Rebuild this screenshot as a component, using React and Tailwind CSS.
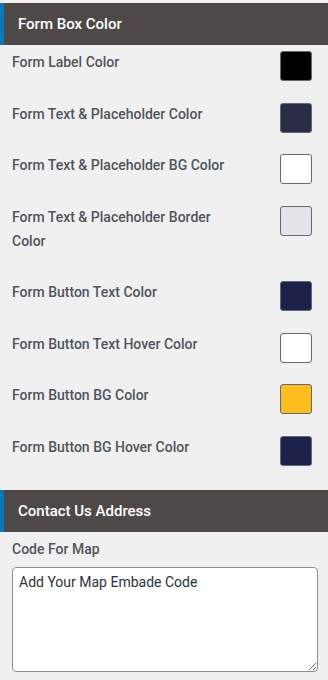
const rows = [
  { label: 'Form Label Color', color: 'bg-[#000000]' },
  { label: 'Form Text & Placeholder Color', color: 'bg-[#2a2d45]' },
  { label: 'Form Text & Placeholder BG Color', color: 'bg-white' },
  { label: 'Form Text & Placeholder Border Color', color: 'bg-[#e4e4e8]' },
  { label: 'Form Button Text Color', color: 'bg-[#1e2149]' },
  { label: 'Form Button Text Hover Color', color: 'bg-white' },
  { label: 'Form Button BG Color', color: 'bg-[#fbbc1c]' },
  { label: 'Form Button BG Hover Color', color: 'bg-[#1e2149]' },
]

const SectionHeader = ({ title, className }) => (
  <div className={`flex h-[42px] items-center bg-[#4e4947] ${className}`}>
    <div className="h-full w-1 bg-[#0a78b8]" />
    <h2 className="pl-[14px] text-[15px] font-medium text-white">{title}</h2>
  </div>
)

const ColorRow = ({ label, color }) => (
  <div className="flex items-start justify-between pl-3 pr-4 pt-[5px] pb-[15.5px]">
    <span className="max-w-[230px] pb-[7px] text-[14px] leading-6 font-medium text-[#50555c]">{label}</span>
    <span className={`mt-px h-[30px] w-8 shrink-0 rounded-[3px] border border-[#5d6b78] ${color}`} />
  </div>
)

export default function App() {
  return (
    <div className="min-h-[680px] w-[328px] bg-[#f0f0f1] pt-[3px] font-['Roboto',sans-serif]">
      <SectionHeader title="Form Box Color" />
      {rows.map((r) => (
        <ColorRow key={r.label} label={r.label} color={r.color} />
      ))}
      <SectionHeader title="Contact Us Address" className="mt-[9px]" />
      <div className="px-3 pt-[5px]">
        <label className="block text-[14px] leading-6 font-medium text-[#50555c]">Code For Map</label>
        <textarea
          className="mt-[6px] block h-[105px] w-[306px] rounded-[4px] border border-[#8c8f94] bg-white px-[6px] py-[2px] text-[14px] leading-6 text-[#2c3338]"
          defaultValue="Add Your Map Embade Code"
        />
      </div>
    </div>
  )
}
